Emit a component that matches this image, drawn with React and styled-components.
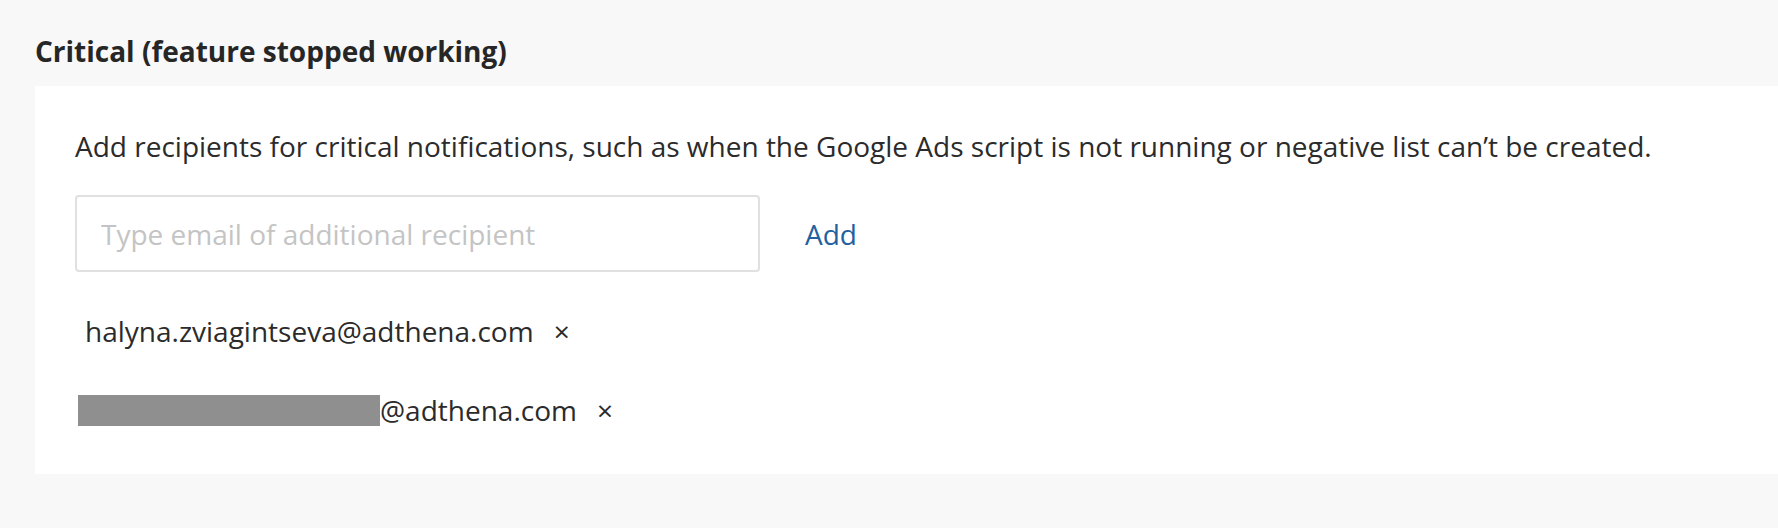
import React from 'react'
import styled, { createGlobalStyle } from 'styled-components'

const GlobalStyle = createGlobalStyle`
  html, body {
    margin: 0;
    padding: 0;
    background: #f8f8f8;
    font-family: "Open Sans", "Liberation Sans", sans-serif;
    color: #2b2b2b;
  }
`

const Page = styled.div`
  padding: 35px 0 54px 35px;
`

const Heading = styled.h2`
  margin: 0;
  font-size: 28px;
  line-height: 32px;
  font-weight: 700;
  color: #262626;
`

const Panel = styled.div`
  margin-top: 19px;
  background: #fff;
  padding: 42px 40px 46px;
`

const Description = styled.p`
  margin: 0;
  font-size: 28px;
  line-height: 36px;
`

const AddRow = styled.div`
  display: flex;
  align-items: center;
  margin-top: 31px;
`

const EmailInput = styled.input`
  box-sizing: border-box;
  width: 685px;
  height: 77px;
  border: 2px solid #e0e0e0;
  border-radius: 4px;
  padding: 0 24px;
  font-family: inherit;
  font-size: 28px;
  color: #2b2b2b;
  outline: none;

  &::placeholder {
    color: #c4c4c4;
  }
`

const AddLink = styled.a`
  margin-left: 45px;
  font-size: 28px;
  color: #23609f;
  cursor: pointer;
`

const RecipientList = styled.ul`
  list-style: none;
  margin: 41px 0 0;
  padding: 0;
  display: flex;
  flex-direction: column;
  gap: 43px;
`

const Recipient = styled.li`
  display: flex;
  align-items: center;
  font-size: 28px;
  line-height: 36px;
  margin-left: ${p => (p.$redacted ? '3px' : '10px')};
`

const Redacted = styled.span`
  display: inline-block;
  width: 302px;
  height: 31px;
  background: #8f8f8f;
`

const Remove = styled.button`
  margin-left: 20px;
  border: 0;
  background: none;
  padding: 0;
  font-family: inherit;
  font-size: 28px;
  line-height: 36px;
  color: #2b2b2b;
  cursor: pointer;
`

const recipients = [
  { local: 'halyna.zviagintseva', domain: '@adthena.com' },
  { local: null, domain: '@adthena.com' },
]

export default function App() {
  return (
    <>
      <GlobalStyle />
      <Page>
        <Heading>Critical (feature stopped working)</Heading>
        <Panel>
          <Description>
            Add recipients for critical notifications, such as when the Google Ads script is not
            running or negative list can’t be created.
          </Description>
          <AddRow>
            <EmailInput placeholder="Type email of additional recipient" />
            <AddLink>Add</AddLink>
          </AddRow>
          <RecipientList>
            {recipients.map((r, i) => (
              <Recipient key={i} $redacted={!r.local}>
                {r.local ? r.local : <Redacted />}
                {r.domain}
                <Remove aria-label="Remove">×</Remove>
              </Recipient>
            ))}
          </RecipientList>
        </Panel>
      </Page>
    </>
  )
}
